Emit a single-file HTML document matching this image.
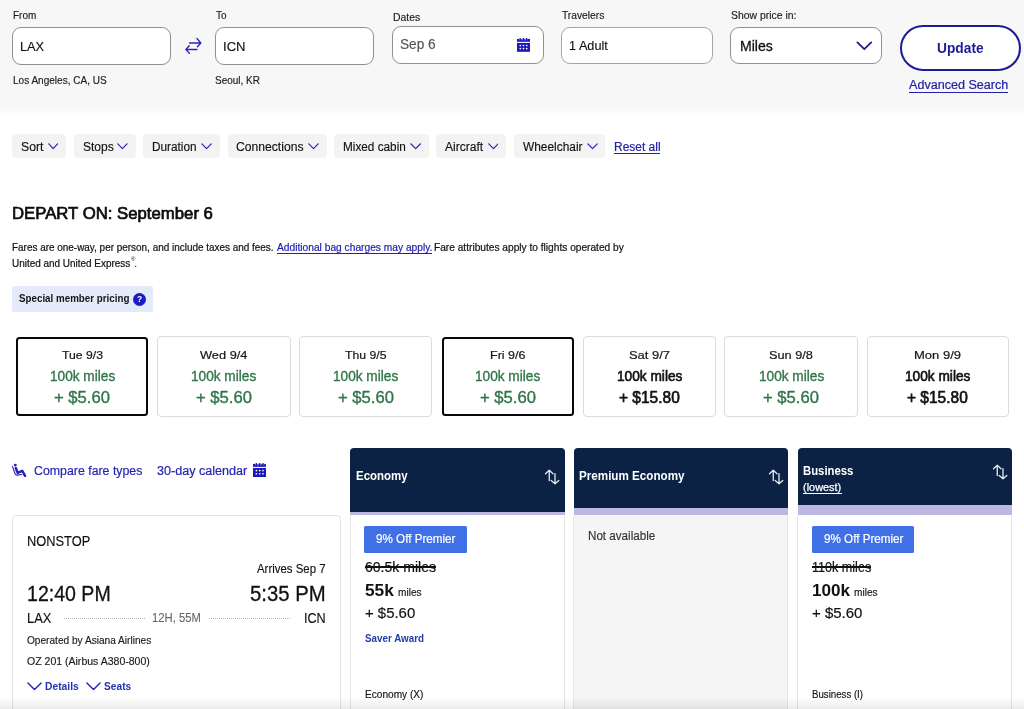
<!DOCTYPE html>
<html><head><meta charset="utf-8">
<style>
*{box-sizing:border-box;margin:0;padding:0}
html,body{width:1024px;height:709px;overflow:hidden;background:#fff}
body{font-family:"Liberation Sans",sans-serif;color:#111;position:relative}
.abs{position:absolute}
.t{position:absolute;white-space:nowrap;line-height:1;transform-origin:0 0}
.inp{position:absolute;border:1px solid #909090;border-radius:9px;background:#fff}
.chip{position:absolute;top:134px;height:24px;background:#f3f3f3;border-radius:4px}
.dc{position:absolute;top:336px;height:80.5px;border:1px solid #dcdcdc;border-radius:4px;background:#fff}
.dc.sel{top:337px;height:78.5px;border:2px solid #080808;border-radius:3.5px}
.ch{position:absolute;top:448px;background:#0b2244;border-radius:4px 4px 0 0}
.lav{position:absolute;background:#bcb8e0}
.cell{position:absolute;top:515.4px;height:200px;background:#fff;border:1px solid #e6e6e6;border-top:none;border-radius:2px 2px 0 0}
.badge{position:absolute;top:526px;height:26.5px;background:#3f70e6;border-radius:1.5px}
</style></head><body><div id="root" style="position:absolute;left:0;top:0;width:1024px;height:709px;will-change:transform">
<div class="abs" style="left:0;top:0;width:1024px;height:108px;background:#f7f7f7"></div>
<div class="abs" style="left:0;top:108px;width:1024px;height:7px;background:linear-gradient(to bottom,#f7f7f7,#fff)"></div>
<div class="t" style="left:12.70px;top:10.11px;font-size:10.5px;color:#1a1a1a;transform:scaleX(0.9510);-webkit-text-stroke:0.15px #1a1a1a;">From</div>
<div class="t" style="left:215.50px;top:10.11px;font-size:10.5px;color:#1a1a1a;transform:scaleX(0.9465);-webkit-text-stroke:0.15px #1a1a1a;">To</div>
<div class="t" style="left:392.60px;top:11.61px;font-size:10.5px;color:#1a1a1a;transform:scaleX(0.9919);-webkit-text-stroke:0.15px #1a1a1a;">Dates</div>
<div class="t" style="left:562.00px;top:10.11px;font-size:10.5px;color:#1a1a1a;transform:scaleX(0.9752);-webkit-text-stroke:0.15px #1a1a1a;">Travelers</div>
<div class="t" style="left:730.70px;top:10.11px;font-size:10.5px;color:#1a1a1a;transform:scaleX(0.9931);-webkit-text-stroke:0.15px #1a1a1a;">Show price in:</div>
<div class="inp" style="left:12px;top:27px;width:159px;height:38px"></div>
<div class="inp" style="left:215px;top:27px;width:159px;height:38px"></div>
<div class="inp" style="left:392px;top:26px;width:152px;height:38px"></div>
<div class="inp" style="left:561px;top:27px;width:152px;height:37px;border-color:#a5a5a5"></div>
<div class="inp" style="left:730px;top:27px;width:152px;height:37px"></div>
<div class="t" style="left:19.90px;top:39.77px;font-size:13.5px;color:#111;transform:scaleX(0.9445);-webkit-text-stroke:0.15px #111;">LAX</div>
<div class="t" style="left:222.70px;top:39.77px;font-size:13.5px;color:#111;transform:scaleX(0.9677);-webkit-text-stroke:0.15px #111;">ICN</div>
<div class="t" style="left:399.70px;top:36.95px;font-size:14px;color:#555;transform:scaleX(0.9756);-webkit-text-stroke:0.15px #555;">Sep 6</div>
<div class="t" style="left:569.00px;top:39.37px;font-size:13.5px;color:#111;transform:scaleX(0.9399);-webkit-text-stroke:0.15px #111;">1 Adult</div>
<div class="t" style="left:739.50px;top:38.95px;font-size:14px;color:#111;transform:scaleX(1.0039);-webkit-text-stroke:0.3px #111;">Miles</div>
<svg class="abs" style="left:517px;top:38.1px" width="13.2" height="13.8" viewBox="0 0 13.2 13.8" preserveAspectRatio="none"><g fill="#1d17ba"><rect x="0" y="0.9" width="13.2" height="2.9"/><rect x="2.6" y="0" width="1.2" height="2"/><rect x="5.9" y="0" width="1.2" height="2"/><rect x="9.1" y="0" width="1.2" height="2"/><rect x="0" y="4.9" width="13.2" height="8.9"/></g><g fill="#fff" opacity=".55"><rect x="1.9" y="0.9" width="0.6" height="1.5"/><rect x="3.9" y="0.9" width="0.6" height="1.5"/><rect x="5.2" y="0.9" width="0.6" height="1.5"/><rect x="7.2" y="0.9" width="0.6" height="1.5"/><rect x="8.4" y="0.9" width="0.6" height="1.5"/><rect x="10.4" y="0.9" width="0.6" height="1.5"/></g><g fill="#fff"><circle cx="3.3" cy="7.5" r="0.85"/><circle cx="6.5" cy="7.5" r="0.85"/><circle cx="9.7" cy="7.5" r="0.85"/><circle cx="3.3" cy="10.6" r="0.85"/><circle cx="6.5" cy="10.6" r="0.85"/><circle cx="9.7" cy="10.6" r="0.85"/></g></svg>
<svg class="abs" style="left:856px;top:41px" width="17" height="10" viewBox="0 0 17 10"><path d="M1.4 1.4 L8.3 8.2 L15.2 1.4" fill="none" stroke="#1c1c90" stroke-width="1.8" stroke-linecap="round" stroke-linejoin="round"/></svg>
<svg class="abs" style="left:184px;top:36px" width="19" height="20" viewBox="0 0 19 20"><g fill="none" stroke="#2d22c4" stroke-width="1.35" stroke-linecap="round" stroke-linejoin="round"><path d="M5.6 6.95 H16.7 M13 2.5 L16.8 6.95 L13.4 10.8"/><path d="M13 13.5 H2 M5.3 9.7 L1.9 13.5 L5.5 17.4"/></g></svg>
<div class="t" style="left:12.70px;top:75.53px;font-size:10px;color:#1a1a1a;transform:scaleX(1.0033);-webkit-text-stroke:0.15px #1a1a1a;">Los Angeles, CA, US</div>
<div class="t" style="left:215.30px;top:75.53px;font-size:10px;color:#1a1a1a;transform:scaleX(0.9971);-webkit-text-stroke:0.15px #1a1a1a;">Seoul, KR</div>
<div class="abs" style="left:899.5px;top:25px;width:121.5px;height:46px;border:2px solid #1c1c96;border-radius:23px;background:#fff"></div>
<div class="t" style="left:936.60px;top:40.83px;font-size:14.5px;color:#1c1c96;transform:scaleX(0.9483);font-weight:bold;">Update</div>
<div class="t" style="left:908.70px;top:79.12px;font-size:12.5px;color:#2222a6;transform:scaleX(1.0064);-webkit-text-stroke:0.2px #2222a6;">Advanced Search</div>
<div class="abs" style="left:908.5px;top:92px;width:99.5px;height:1.3px;background:#2222a6"></div>
<div class="chip" style="left:12.2px;width:54.1px"></div>
<div class="t" style="left:21.00px;top:140.84px;font-size:12px;color:#111;transform:scaleX(1.0175);-webkit-text-stroke:0.15px #111;">Sort</div>
<svg class="abs" style="left:47.5px;top:143px" width="10.4" height="7" viewBox="0 0 10.4 7"><path d="M0.8 0.8 L5.20 5.6 L9.60 0.8" fill="none" stroke="#2c24b8" stroke-width="1.2" stroke-linecap="round" stroke-linejoin="round"/></svg>
<div class="chip" style="left:73.8px;width:62.6px"></div>
<div class="t" style="left:82.50px;top:140.84px;font-size:12px;color:#111;transform:scaleX(1.0004);-webkit-text-stroke:0.15px #111;">Stops</div>
<svg class="abs" style="left:117.4px;top:143px" width="10.8" height="7" viewBox="0 0 10.8 7"><path d="M0.8 0.8 L5.40 5.6 L10.00 0.8" fill="none" stroke="#2c24b8" stroke-width="1.2" stroke-linecap="round" stroke-linejoin="round"/></svg>
<div class="chip" style="left:142.5px;width:77.3px"></div>
<div class="t" style="left:152.30px;top:140.84px;font-size:12px;color:#111;transform:scaleX(0.9833);-webkit-text-stroke:0.15px #111;">Duration</div>
<svg class="abs" style="left:201.0px;top:143px" width="11.1" height="7" viewBox="0 0 11.1 7"><path d="M0.8 0.8 L5.55 5.6 L10.30 0.8" fill="none" stroke="#2c24b8" stroke-width="1.2" stroke-linecap="round" stroke-linejoin="round"/></svg>
<div class="chip" style="left:227.7px;width:98.9px"></div>
<div class="t" style="left:236.40px;top:140.84px;font-size:12px;color:#111;transform:scaleX(1.0119);-webkit-text-stroke:0.15px #111;">Connections</div>
<svg class="abs" style="left:307.9px;top:143px" width="11.0" height="7" viewBox="0 0 11.0 7"><path d="M0.8 0.8 L5.50 5.6 L10.20 0.8" fill="none" stroke="#2c24b8" stroke-width="1.2" stroke-linecap="round" stroke-linejoin="round"/></svg>
<div class="chip" style="left:334.1px;width:94.5px"></div>
<div class="t" style="left:343.00px;top:140.84px;font-size:12px;color:#111;transform:scaleX(0.9808);-webkit-text-stroke:0.15px #111;">Mixed cabin</div>
<svg class="abs" style="left:409.8px;top:143px" width="11.3" height="7" viewBox="0 0 11.3 7"><path d="M0.8 0.8 L5.65 5.6 L10.50 0.8" fill="none" stroke="#2c24b8" stroke-width="1.2" stroke-linecap="round" stroke-linejoin="round"/></svg>
<div class="chip" style="left:436.3px;width:69.9px"></div>
<div class="t" style="left:445.20px;top:140.84px;font-size:12px;color:#111;transform:scaleX(1.0053);-webkit-text-stroke:0.15px #111;">Aircraft</div>
<svg class="abs" style="left:487.6px;top:143px" width="10.9" height="7" viewBox="0 0 10.9 7"><path d="M0.8 0.8 L5.45 5.6 L10.10 0.8" fill="none" stroke="#2c24b8" stroke-width="1.2" stroke-linecap="round" stroke-linejoin="round"/></svg>
<div class="chip" style="left:514.4px;width:90.9px"></div>
<div class="t" style="left:523.30px;top:140.84px;font-size:12px;color:#111;transform:scaleX(0.9912);-webkit-text-stroke:0.15px #111;">Wheelchair</div>
<svg class="abs" style="left:587.0px;top:143px" width="11.1" height="7" viewBox="0 0 11.1 7"><path d="M0.8 0.8 L5.55 5.6 L10.30 0.8" fill="none" stroke="#2c24b8" stroke-width="1.2" stroke-linecap="round" stroke-linejoin="round"/></svg>
<div class="t" style="left:613.50px;top:140.84px;font-size:12px;color:#2222a6;transform:scaleX(0.9981);-webkit-text-stroke:0.2px #2222a6;">Reset all</div>
<div class="abs" style="left:613.5px;top:153px;width:46.6px;height:1.2px;background:#2222a6"></div>
<div class="t" style="left:12.20px;top:204.66px;font-size:17.3px;color:#0c0c0c;transform:scaleX(0.9685);-webkit-text-stroke:0.7px #0c0c0c;">DEPART ON: September 6</div>
<div class="t" style="left:12.20px;top:242.68px;font-size:10.3px;color:#141414;transform:scaleX(0.9649);-webkit-text-stroke:0.22px #141414;">Fares are one-way, per person, and include taxes and fees.</div>
<div class="t" style="left:276.60px;top:242.68px;font-size:10.3px;color:#2222b0;transform:scaleX(0.9921);-webkit-text-stroke:0.2px #2222b0;">Additional bag charges may apply.</div>
<div class="abs" style="left:276.6px;top:253px;width:155.4px;height:0.9px;background:#2222b0"></div>
<div class="t" style="left:434.20px;top:242.68px;font-size:10.3px;color:#141414;transform:scaleX(0.9869);-webkit-text-stroke:0.22px #141414;">Fare attributes apply to flights operated by</div>
<div class="t" style="left:12.20px;top:258.58px;font-size:10.3px;color:#141414;transform:scaleX(0.9658);-webkit-text-stroke:0.22px #141414;">United and United Express</div>
<div class="t" style="left:131px;top:255.5px;font-size:6px;color:#1a1a1a">®</div>
<div class="t" style="left:134.3px;top:258.6px;font-size:10.3px;color:#1a1a1a">.</div>
<div class="abs" style="left:12px;top:286px;width:141px;height:25.7px;background:#e3eaf9;border-radius:2px"></div>
<div class="t" style="left:19.10px;top:293.39px;font-size:11px;color:#151515;transform:scaleX(0.8896);font-weight:bold;">Special member pricing</div>
<div class="abs" style="left:133.2px;top:292.8px;width:13px;height:13px;border-radius:50%;background:#1c1cc4"></div>
<div class="t" style="left:133.2px;width:13px;text-align:center;top:295.3px;font-size:8.5px;font-weight:bold;color:#fff">?</div>
<div class="dc sel" style="left:16px;width:132px"></div>
<div class="t" style="left:61.55px;top:348.80px;font-size:11.7px;color:#151515;transform:scaleX(1.0471);-webkit-text-stroke:0.2px #151515;">Tue 9/3</div>
<div class="t" style="left:49.50px;top:369.35px;font-size:14px;color:#2f7548;transform:scaleX(0.9743);-webkit-text-stroke:0.35px #2f7548;">100k miles</div>
<div class="t" style="left:54.10px;top:389.12px;font-size:16.4px;color:#2f7548;transform:scaleX(1.0147);-webkit-text-stroke:0.35px #2f7548;">+ $5.60</div>
<div class="dc" style="left:157px;width:134px"></div>
<div class="t" style="left:200.25px;top:348.80px;font-size:11.7px;color:#151515;transform:scaleX(1.0951);-webkit-text-stroke:0.2px #151515;">Wed 9/4</div>
<div class="t" style="left:191.40px;top:369.35px;font-size:14px;color:#2f7548;transform:scaleX(0.9743);-webkit-text-stroke:0.35px #2f7548;">100k miles</div>
<div class="t" style="left:196.00px;top:389.12px;font-size:16.4px;color:#2f7548;transform:scaleX(1.0147);-webkit-text-stroke:0.35px #2f7548;">+ $5.60</div>
<div class="dc" style="left:299px;width:133px"></div>
<div class="t" style="left:344.75px;top:348.80px;font-size:11.7px;color:#151515;transform:scaleX(1.0457);-webkit-text-stroke:0.2px #151515;">Thu 9/5</div>
<div class="t" style="left:332.90px;top:369.35px;font-size:14px;color:#2f7548;transform:scaleX(0.9743);-webkit-text-stroke:0.35px #2f7548;">100k miles</div>
<div class="t" style="left:337.50px;top:389.12px;font-size:16.4px;color:#2f7548;transform:scaleX(1.0147);-webkit-text-stroke:0.35px #2f7548;">+ $5.60</div>
<div class="dc sel" style="left:441.7px;width:132px"></div>
<div class="t" style="left:489.95px;top:348.80px;font-size:11.7px;color:#151515;transform:scaleX(1.0702);-webkit-text-stroke:0.2px #151515;">Fri 9/6</div>
<div class="t" style="left:475.10px;top:369.35px;font-size:14px;color:#2f7548;transform:scaleX(0.9743);-webkit-text-stroke:0.35px #2f7548;">100k miles</div>
<div class="t" style="left:479.70px;top:389.12px;font-size:16.4px;color:#2f7548;transform:scaleX(1.0147);-webkit-text-stroke:0.35px #2f7548;">+ $5.60</div>
<div class="dc" style="left:583px;width:133px"></div>
<div class="t" style="left:629.00px;top:348.80px;font-size:11.7px;color:#151515;transform:scaleX(1.1053);-webkit-text-stroke:0.2px #151515;">Sat 9/7</div>
<div class="t" style="left:616.80px;top:369.35px;font-size:14px;color:#111;transform:scaleX(0.9773);-webkit-text-stroke:0.6px #111;">100k miles</div>
<div class="t" style="left:619.10px;top:389.12px;font-size:16.4px;color:#111;transform:scaleX(0.9454);-webkit-text-stroke:0.65px #111;">+ $15.80</div>
<div class="dc" style="left:724px;width:134px"></div>
<div class="t" style="left:769.10px;top:348.80px;font-size:11.7px;color:#151515;transform:scaleX(1.0906);-webkit-text-stroke:0.2px #151515;">Sun 9/8</div>
<div class="t" style="left:758.50px;top:369.35px;font-size:14px;color:#2f7548;transform:scaleX(0.9743);-webkit-text-stroke:0.35px #2f7548;">100k miles</div>
<div class="t" style="left:763.10px;top:389.12px;font-size:16.4px;color:#2f7548;transform:scaleX(1.0147);-webkit-text-stroke:0.35px #2f7548;">+ $5.60</div>
<div class="dc" style="left:867px;width:142px"></div>
<div class="t" style="left:913.85px;top:348.80px;font-size:11.7px;color:#151515;transform:scaleX(1.1140);-webkit-text-stroke:0.2px #151515;">Mon 9/9</div>
<div class="t" style="left:904.70px;top:369.35px;font-size:14px;color:#111;transform:scaleX(0.9773);-webkit-text-stroke:0.6px #111;">100k miles</div>
<div class="t" style="left:907.00px;top:389.12px;font-size:16.4px;color:#111;transform:scaleX(0.9454);-webkit-text-stroke:0.65px #111;">+ $15.80</div>
<svg class="abs" style="left:6px;top:456px" width="28" height="28" viewBox="0 0 28 28"><circle cx="9.3" cy="9.1" r="1.45" fill="#2a1fc0"/><path d="M9.8 12 L11.7 16.9 L16.3 14.9 L19.1 19.8" fill="none" stroke="#2a1fc0" stroke-width="2.5" stroke-linecap="round" stroke-linejoin="round"/><path d="M6.4 10.4 L9.2 18 Q9.7 19.2 11 19.1 L15.6 18.5" fill="none" stroke="#2a1fc0" stroke-width="1.1" stroke-linecap="round" stroke-linejoin="round"/></svg>
<div class="t" style="left:33.70px;top:464.62px;font-size:12.5px;color:#2424b4;transform:scaleX(0.9876);-webkit-text-stroke:0.2px #2424b4;">Compare fare types</div>
<div class="t" style="left:157.30px;top:464.62px;font-size:12.5px;color:#2424b4;transform:scaleX(1.0074);-webkit-text-stroke:0.2px #2424b4;">30-day calendar</div>
<svg class="abs" style="left:252.5px;top:463.3px" width="13.6" height="14" viewBox="0 0 13.2 13.8" preserveAspectRatio="none"><g fill="#1d17ba"><rect x="0" y="0.9" width="13.2" height="2.9"/><rect x="2.6" y="0" width="1.2" height="2"/><rect x="5.9" y="0" width="1.2" height="2"/><rect x="9.1" y="0" width="1.2" height="2"/><rect x="0" y="4.9" width="13.2" height="8.9"/></g><g fill="#fff" opacity=".55"><rect x="1.9" y="0.9" width="0.6" height="1.5"/><rect x="3.9" y="0.9" width="0.6" height="1.5"/><rect x="5.2" y="0.9" width="0.6" height="1.5"/><rect x="7.2" y="0.9" width="0.6" height="1.5"/><rect x="8.4" y="0.9" width="0.6" height="1.5"/><rect x="10.4" y="0.9" width="0.6" height="1.5"/></g><g fill="#fff"><circle cx="3.3" cy="7.5" r="0.85"/><circle cx="6.5" cy="7.5" r="0.85"/><circle cx="9.7" cy="7.5" r="0.85"/><circle cx="3.3" cy="10.6" r="0.85"/><circle cx="6.5" cy="10.6" r="0.85"/><circle cx="9.7" cy="10.6" r="0.85"/></g></svg>
<div class="lav" style="left:349.8px;top:500px;width:215.2px;height:15.4px"></div>
<div class="lav" style="left:573.6px;top:500px;width:214.4px;height:15.4px"></div>
<div class="lav" style="left:797.5px;top:500px;width:214.3px;height:15.4px"></div>
<div class="ch" style="left:349.8px;width:215.2px;height:63.5px"></div>
<div class="ch" style="left:573.6px;width:214.4px;height:60px"></div>
<div class="ch" style="left:797.5px;width:214.3px;height:57px"></div>
<div class="t" style="left:355.70px;top:470.14px;font-size:12px;color:#fff;transform:scaleX(0.9553);font-weight:bold;">Economy</div>
<div class="t" style="left:579.20px;top:470.14px;font-size:12px;color:#fff;transform:scaleX(0.9705);font-weight:bold;">Premium Economy</div>
<div class="t" style="left:802.70px;top:464.54px;font-size:12px;color:#fff;transform:scaleX(0.9445);font-weight:bold;">Business</div>
<div class="t" style="left:803.20px;top:481.59px;font-size:11px;color:#fff;transform:scaleX(0.9922);-webkit-text-stroke:0.25px #fff;">(lowest)</div>
<div class="abs" style="left:802.5px;top:493px;width:39.5px;height:1px;background:#fff"></div>
<svg class="abs" style="left:538px;top:462px" width="28" height="28" viewBox="0 0 28 28"><g fill="none" stroke="#e6ebf2" stroke-width="1.3" stroke-linecap="round" stroke-linejoin="round"><path d="M11.25 18.5 V8.4 M7.5 11.7 L11.25 8.2 L15 11.7"/><path d="M17 11.6 V21.4 M13.2 18.4 L17 21.7 L20.8 18.4"/></g></svg>
<svg class="abs" style="left:762.2px;top:462px" width="28" height="28" viewBox="0 0 28 28"><g fill="none" stroke="#e6ebf2" stroke-width="1.3" stroke-linecap="round" stroke-linejoin="round"><path d="M11.25 18.5 V8.4 M7.5 11.7 L11.25 8.2 L15 11.7"/><path d="M17 11.6 V21.4 M13.2 18.4 L17 21.7 L20.8 18.4"/></g></svg>
<svg class="abs" style="left:986px;top:456.6px" width="28" height="28" viewBox="0 0 28 28"><g fill="none" stroke="#e6ebf2" stroke-width="1.3" stroke-linecap="round" stroke-linejoin="round"><path d="M11.25 18.5 V8.4 M7.5 11.7 L11.25 8.2 L15 11.7"/><path d="M17 11.6 V21.4 M13.2 18.4 L17 21.7 L20.8 18.4"/></g></svg>
<div class="cell" style="left:349.5px;width:215.8px"></div>
<div class="cell" style="left:573.3px;width:215px;background:#f5f5f5"></div>
<div class="cell" style="left:797.3px;width:214.8px"></div>
<div class="badge" style="left:364.1px;width:102.9px"></div>
<div class="badge" style="left:811.7px;width:102.8px"></div>
<div class="t" style="left:375.90px;top:533.39px;font-size:12.3px;color:#fff;transform:scaleX(0.9472);-webkit-text-stroke:0.2px #fff;">9% Off Premier</div>
<div class="t" style="left:823.50px;top:533.39px;font-size:12.3px;color:#fff;transform:scaleX(0.9472);-webkit-text-stroke:0.2px #fff;">9% Off Premier</div>
<div class="t" style="left:364.70px;top:559.75px;font-size:14px;color:#111;transform:scaleX(1.0026);-webkit-text-stroke:0.2px #111;">60.5k miles</div>
<div class="abs" style="left:364.5px;top:566.3px;width:71.4px;height:1.3px;background:#111"></div>
<div class="t" style="left:364.70px;top:581.51px;font-size:17px;color:#111;transform:scaleX(1.0179);font-weight:bold;">55k</div>
<div class="t" style="left:397.80px;top:586.84px;font-size:10.7px;color:#111;transform:scaleX(0.9452);-webkit-text-stroke:0.15px #111;">miles</div>
<div class="t" style="left:364.70px;top:605.20px;font-size:15px;color:#111;transform:scaleX(0.9947);-webkit-text-stroke:0.2px #111;">+ $5.60</div>
<div class="t" style="left:364.70px;top:632.89px;font-size:11px;color:#1f3ea8;transform:scaleX(0.8935);font-weight:bold;">Saver Award</div>
<div class="t" style="left:364.70px;top:688.64px;font-size:10.7px;color:#111;transform:scaleX(0.9457);-webkit-text-stroke:0.15px #111;">Economy (X)</div>
<div class="t" style="left:588.10px;top:529.67px;font-size:12.2px;color:#333;transform:scaleX(0.9540);-webkit-text-stroke:0.15px #333;">Not available</div>
<div class="t" style="left:811.70px;top:559.75px;font-size:14px;color:#111;transform:scaleX(0.8987);-webkit-text-stroke:0.2px #111;">110k miles</div>
<div class="abs" style="left:811.5px;top:566.3px;width:59.6px;height:1.3px;background:#111"></div>
<div class="t" style="left:811.70px;top:581.51px;font-size:17px;color:#111;transform:scaleX(1.0068);font-weight:bold;">100k</div>
<div class="t" style="left:853.50px;top:586.84px;font-size:10.7px;color:#111;transform:scaleX(0.9452);-webkit-text-stroke:0.15px #111;">miles</div>
<div class="t" style="left:811.70px;top:605.20px;font-size:15px;color:#111;transform:scaleX(0.9986);-webkit-text-stroke:0.2px #111;">+ $5.60</div>
<div class="t" style="left:811.70px;top:688.64px;font-size:10.7px;color:#111;transform:scaleX(0.9044);-webkit-text-stroke:0.15px #111;">Business (I)</div>
<div class="abs" style="left:12px;top:515px;width:329.3px;height:210px;border:1px solid #e4e4e4;border-radius:4px;background:#fff"></div>
<div class="t" style="left:26.70px;top:533.60px;font-size:14.3px;color:#111;transform:scaleX(0.8972);-webkit-text-stroke:0.15px #111;">NONSTOP</div>
<div class="t" style="left:257.30px;top:563.33px;font-size:12.6px;color:#111;transform:scaleX(0.9075);-webkit-text-stroke:0.15px #111;">Arrives Sep 7</div>
<div class="t" style="left:27.20px;top:583.02px;font-size:21.6px;color:#111;transform:scaleX(0.9056);-webkit-text-stroke:0.3px #111;">12:40 PM</div>
<div class="t" style="left:250.30px;top:583.02px;font-size:21.6px;color:#111;transform:scaleX(0.9400);-webkit-text-stroke:0.3px #111;">5:35 PM</div>
<div class="t" style="left:26.70px;top:610.63px;font-size:14.5px;color:#111;transform:scaleX(0.8903);-webkit-text-stroke:0.15px #111;">LAX</div>
<div class="t" style="left:304.20px;top:610.63px;font-size:14.5px;color:#111;transform:scaleX(0.8691);-webkit-text-stroke:0.15px #111;">ICN</div>
<div class="abs" style="left:64px;top:618.2px;width:80.6px;height:0;border-top:1px dotted #b5b5b5"></div>
<div class="abs" style="left:208.8px;top:618.2px;width:81.4px;height:0;border-top:1px dotted #b5b5b5"></div>
<div class="t" style="left:152.10px;top:612.49px;font-size:12.3px;color:#666;transform:scaleX(0.9154);-webkit-text-stroke:0.1px #666;">12H, 55M</div>
<div class="t" style="left:26.70px;top:636.00px;font-size:10.4px;color:#1a1a1a;transform:scaleX(0.9731);-webkit-text-stroke:0.15px #1a1a1a;">Operated by Asiana Airlines</div>
<div class="t" style="left:26.70px;top:656.50px;font-size:10.4px;color:#1a1a1a;transform:scaleX(1.0126);-webkit-text-stroke:0.15px #1a1a1a;">OZ 201 (Airbus A380-800)</div>
<svg class="abs" style="left:26.5px;top:682px" width="15" height="9" viewBox="0 0 15 9"><path d="M0.9 0.9 L7.5 7.6 L14.1 0.9" fill="none" stroke="#2424b4" stroke-width="1.4" stroke-linecap="round" stroke-linejoin="round"/></svg>
<div class="t" style="left:44.90px;top:680.56px;font-size:10.8px;color:#2432b0;transform:scaleX(0.9518);font-weight:bold;">Details</div>
<svg class="abs" style="left:85.5px;top:682px" width="15" height="9" viewBox="0 0 15 9"><path d="M0.9 0.9 L7.5 7.6 L14.1 0.9" fill="none" stroke="#2424b4" stroke-width="1.4" stroke-linecap="round" stroke-linejoin="round"/></svg>
<div class="t" style="left:103.90px;top:680.56px;font-size:10.8px;color:#2432b0;transform:scaleX(0.9440);font-weight:bold;">Seats</div>
<div class="abs" style="left:0;top:697px;width:1024px;height:12px;background:linear-gradient(to bottom,rgba(0,0,0,0),rgba(0,0,0,0.075))"></div>
</div></body></html>
